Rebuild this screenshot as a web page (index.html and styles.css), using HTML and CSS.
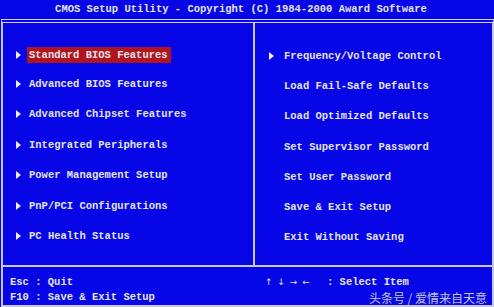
FILE: index.html
```html
<!DOCTYPE html>
<html lang="en">
<head>
    <meta charset="UTF-8">
    <meta name="viewport" content="width=device-width, initial-scale=1.0">
    <title>CMOS Setup Utility</title>
    <link rel="stylesheet" href="styles.css">
</head>
<body>
<div class="title">CMOS Setup Utility - Copyright (C) 1984-2000 Award Software</div>

<div class="frame">
    <div class="menus">
        <ul class="menu menu-left">
            <li class="item sub"><span class="label selected">Standard BIOS Features</span></li>
            <li class="item sub"><span class="label">Advanced BIOS Features</span></li>
            <li class="item sub"><span class="label">Advanced Chipset Features</span></li>
            <li class="item sub"><span class="label">Integrated Peripherals</span></li>
            <li class="item sub"><span class="label">Power Management Setup</span></li>
            <li class="item sub"><span class="label">PnP/PCI Configurations</span></li>
            <li class="item sub"><span class="label">PC Health Status</span></li>
        </ul>
        <ul class="menu menu-right">
            <li class="item sub"><span class="label">Frequency/Voltage Control</span></li>
            <li class="item"><span class="label">Load Fail-Safe Defaults</span></li>
            <li class="item"><span class="label">Load Optimized Defaults</span></li>
            <li class="item"><span class="label">Set Supervisor Password</span></li>
            <li class="item"><span class="label">Set User Password</span></li>
            <li class="item"><span class="label">Save &amp; Exit Setup</span></li>
            <li class="item"><span class="label">Exit Without Saving</span></li>
        </ul>
    </div>

    <div class="footer">
        <div class="keys">
            <div>Esc : Quit</div>
            <div>F10 : Save &amp; Exit Setup</div>
        </div>
        <div class="keys keys-right">
            <div><span class="arrows">&uarr; &darr; &rarr; &larr;</span>: Select Item</div>
            <div class="mark">头条号 / 爱情来自天意</div>
        </div>
    </div>
</div>
</body>
</html>
```

FILE: styles.css
```css
body {
    margin: 0;
    width: 494px;
    height: 307px;
    overflow: hidden;
    background-color: #0606e6;
    color: #e4e4ee;
    font-family: "Liberation Mono", "DejaVu Sans Mono", monospace;
    font-size: 10.5px;
    font-weight: bold;
}

.title {
    height: 19px;
    line-height: 19px;
    text-align: center;
    padding-right: 12px;
}

.frame {
    margin-left: 1px;
    width: 489px;
    height: 282px;
    border: 2px solid #c8c8dc;
    border-top: 4px double #d0d0e0;
}

.menus {
    display: grid;
    grid-template-columns: 252px 1fr;
    height: 242px;
    border-bottom: 2px solid #c8c8dc;
}

.menu {
    list-style: none;
    margin: 0;
    padding: 0;
}

.menu-left {
    border-right: 2px solid #c8c8dc;
    padding-top: 17px;
    padding-left: 24px;
}

.menu-right {
    padding-top: 18px;
    padding-left: 27px;
}

.item {
    position: relative;
    height: 30.2px;
    line-height: 30px;
}

.menu-left .item {
    height: 30.5px;
}

.menu-left .item:nth-child(2) {
    margin-top: -2px;
}

.item.sub::before {
    content: "";
    position: absolute;
    left: -11px;
    top: 11px;
    border-left: 5px solid #ececf4;
    border-top: 4px solid transparent;
    border-bottom: 4px solid transparent;
}

.menu-right .item.sub::before {
    left: -13px;
}

.label {
    padding: 2px 3px 2px 2px;
}

.selected {
    background-color: #b0141c;
}

.footer {
    display: grid;
    grid-template-columns: 253px 1fr;
    padding-top: 8px;
    padding-left: 7px;
    line-height: 15px;
}

.keys-right {
    padding-left: 2px;
}

.arrows {
    display: inline-block;
    width: 62px;
    font-family: "DejaVu Sans", sans-serif;
    font-size: 9px;
    font-weight: normal;
    letter-spacing: 1px;
}

.mark {
    text-align: right;
    padding-right: 5px;
    font-family: "Noto Sans CJK SC", sans-serif;
    font-size: 12px;
    font-weight: normal;
    color: #c4c4dc;
}
```
